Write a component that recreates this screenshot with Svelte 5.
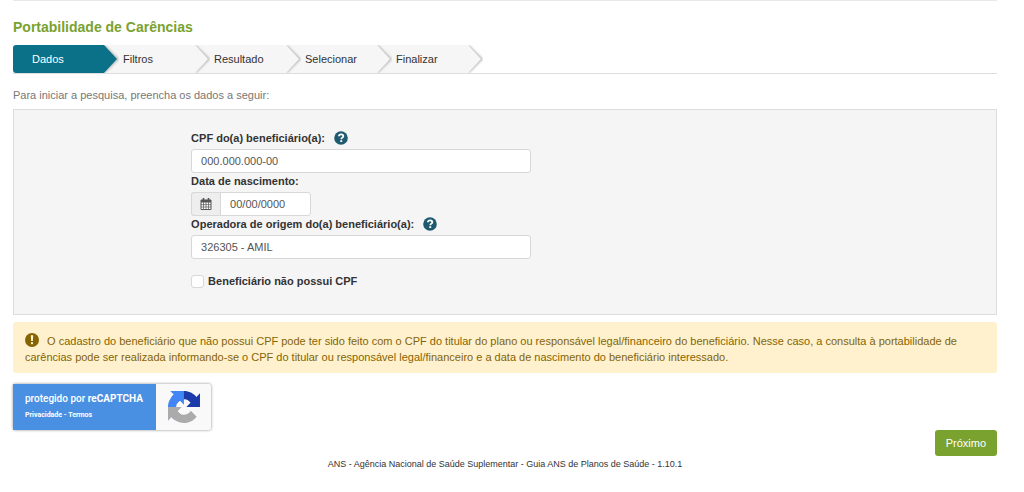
<script lang="ts">
	const steps = ['Dados', 'Filtros', 'Resultado', 'Selecionar', 'Finalizar'];

	let current = $state(0);
	let cpf = $state('000.000.000-00');
	let birthDate = $state('00/00/0000');
	let operator = $state('326305 - AMIL');
	let withoutCpf = $state(false);
</script>

{#snippet helpIcon()}
	<svg class="help" viewBox="0 0 14 14" aria-hidden="true">
		<circle cx="7" cy="7" r="6.8" fill="#1f5a70" />
		<path d="M4.9 5.3C5 3.9 5.9 3.4 7.1 3.4c1.3 0 2.2.7 2.2 1.8 0 1.5-2 1.4-2 3" fill="none" stroke="#fff" stroke-width="1.8" />
		<rect x="6.3" y="9.2" width="1.9" height="1.8" fill="#fff" />
	</svg>
{/snippet}

<main>
	<h1>Portabilidade de Carências</h1>

	<ol class="steps">
		{#each steps as step, i}
			<li class:active={i === current}>
				<span>{step}</span>
				<svg class="arrow" viewBox="0 0 16 28" aria-hidden="true">
					<path class="line" d="M1 1L14 14L1 27" />
					<path class="fill" d="M0 0H1L14 14L1 28H0Z" />
				</svg>
			</li>
		{/each}
	</ol>

	<p class="intro">Para iniciar a pesquisa, preencha os dados a seguir:</p>

	<form id="search" class="panel">
		<div class="fields">
			<div class="label-row">
				<label for="cpf">CPF do(a) beneficiário(a):</label>
				{@render helpIcon()}
			</div>
			<input id="cpf" type="text" bind:value={cpf} />

			<div class="label-row">
				<label for="birth">Data de nascimento:</label>
			</div>
			<div class="input-group">
				<span class="addon">
					<svg viewBox="0 0 12 12" aria-hidden="true">
						<path d="M1 2H11V11.5H1Z" fill="#fff" stroke="#555" />
						<path d="M1 2H11V4.5H1Z" fill="#555" />
						<path d="M3.5 0V3M8.5 0V3" stroke="#555" stroke-width="1.6" />
						<path d="M3.5 4V11M6 4V11M8.5 4V11M1 6.6H11M1 9H11" stroke="#555" stroke-width="0.7" />
					</svg>
				</span>
				<input id="birth" type="text" bind:value={birthDate} />
			</div>

			<div class="label-row">
				<label for="operator">Operadora de origem do(a) beneficiário(a):</label>
				{@render helpIcon()}
			</div>
			<input id="operator" type="text" bind:value={operator} />

			<div class="check">
				<input id="no-cpf" type="checkbox" bind:checked={withoutCpf} />
				<label for="no-cpf">Beneficiário não possui CPF</label>
			</div>
		</div>
	</form>

	<div class="alert">
		<svg viewBox="0 0 14 14" aria-hidden="true">
			<circle cx="7" cy="7" r="7" fill="#856404" />
			<path d="M5.8 2.2H8.2L7.9 8H6.1Z" fill="#fff3cd" />
			<rect x="6" y="9.2" width="2" height="2" fill="#fff3cd" />
		</svg>
		O cadastro do beneficiário que não possui CPF pode ter sido feito com o CPF do titular do plano ou
		responsável legal/financeiro do beneficiário. Nesse caso, a consulta à portabilidade de carências
		pode ser realizada informando-se o CPF do titular ou responsável legal/financeiro e a data de
		nascimento do beneficiário interessado.
	</div>

	<div class="captcha">
		<div class="captcha-text">
			<div>protegido por <strong>reCAPTCHA</strong></div>
			<div class="captcha-links"><a href="#privacidade">Privacidade</a> - <a href="#termos">Termos</a></div>
		</div>
		<div class="captcha-logo">
			<svg viewBox="0 0 64 64" aria-hidden="true">
				<path
					d="M64 31.955l-.033-1.37V4.687l-7.16 7.16C50.948 4.674 42.033.093 32.05.093c-10.4 0-19.622 4.96-25.458 12.64l11.736 11.86a15.55 15.55 0 0 1 4.754-5.334c2.05-1.6 4.952-2.906 8.968-2.906.485 0 .86.057 1.135.163 4.976.393 9.288 3.14 11.828 7.124l-8.307 8.307L64 31.953"
					fill="#1c3aa9"
				/>
				<path
					d="M31.862.094l-1.37.033H4.594l7.16 7.16C4.58 13.147 0 22.06 0 32.046c0 10.4 4.96 19.622 12.64 25.458L24.5 45.768a15.55 15.55 0 0 1-5.334-4.754c-1.6-2.05-2.906-4.952-2.906-8.968 0-.485.057-.86.163-1.135.393-4.976 3.14-9.288 7.124-11.828l8.307 8.307L31.86.095"
					fill="#4285f4"
				/>
				<path
					d="M.001 32.045l.033 1.37v25.898l7.16-7.16c5.86 7.173 14.774 11.754 24.76 11.754 10.4 0 19.622-4.96 25.458-12.64l-11.736-11.86a15.55 15.55 0 0 1-4.754 5.334c-2.05 1.6-4.952 2.906-8.968 2.906-.485 0-.86-.057-1.135-.163-4.976-.393-9.288-3.14-11.828-7.124l8.307-8.307c-10.522.04-22.4.066-27.295-.005"
					fill="#ababab"
				/>
			</svg>
		</div>
	</div>

	<div class="actions">
		<button type="submit" form="search">Próximo</button>
	</div>

	<footer>ANS - Agência Nacional de Saúde Suplementar - Guia ANS de Planos de Saúde - 1.10.1</footer>
</main>

<style>
	:global(body) {
		background: #fff;
	}
	main {
		margin: 0 27px 0 13px;
		border-top: 1px solid #e8e8e8;
		color: #333;
		font-family: 'Liberation Sans', Arial, sans-serif;
		font-size: 11px;
		line-height: 16px;
	}
	h1 {
		margin: 18px 0 9px;
		color: #7aa22f;
		font-size: 14px;
		line-height: 17px;
	}
	.steps {
		display: flex;
		margin: 0;
		padding: 0;
		list-style: none;
		border-bottom: 1px solid #ddd;
	}
	li {
		position: relative;
		box-sizing: border-box;
		width: 91px;
		padding-left: 19px;
		background: #f6f6f6;
		line-height: 28px;
	}
	li.active {
		border-radius: 3px 0 0 3px;
		background: #0b7189;
		color: #fff;
	}
	.arrow {
		position: absolute;
		top: 0;
		left: 100%;
		z-index: 1;
		width: 16px;
		height: 28px;
		margin-left: -1px;
	}
	.arrow .fill {
		fill: #f6f6f6;
	}
	.arrow .line {
		fill: none;
		stroke: #bbb;
		stroke-width: 3;
		filter: blur(1px);
	}
	.active .arrow .fill {
		fill: #0b7189;
	}
	.intro {
		margin: 13px 0 6px;
		color: #777;
	}
	.panel {
		padding: 20px 18% 25px;
		border: 1px solid #ddd;
		background: #f5f5f5;
	}
	.fields {
		max-width: 340px;
	}
	.label-row {
		display: flex;
		align-items: flex-start;
		gap: 9px;
		height: 19px;
	}
	label {
		font-weight: bold;
	}
	.help {
		width: 14px;
		height: 16px;
	}
	input[type='text'] {
		display: block;
		box-sizing: border-box;
		width: 100%;
		height: 24px;
		padding: 0 9px;
		border: 1px solid #d8d8d8;
		border-radius: 3px;
		background: #fff;
		color: #555;
		font: inherit;
	}
	.input-group {
		display: flex;
		width: 120px;
	}
	.addon {
		display: flex;
		flex: none;
		align-items: center;
		justify-content: center;
		width: 28px;
		border: 1px solid #d8d8d8;
		border-right: 0;
		border-radius: 3px 0 0 3px;
		background: #eee;
	}
	.addon svg {
		width: 12px;
		height: 12px;
	}
	.input-group input[type='text'] {
		flex: 1;
		min-width: 0;
		border-radius: 0 3px 3px 0;
	}
	.check {
		display: flex;
		align-items: center;
		gap: 4px;
		margin-top: 14px;
	}
	.check input {
		appearance: none;
		box-sizing: border-box;
		width: 13px;
		height: 13px;
		margin: 0;
		border: 1px solid #d8d8d8;
		border-radius: 3px;
		background: #fff;
	}
	.check input:checked {
		background: #0b7189;
	}
	.alert {
		margin-top: 7px;
		padding: 11px 12px 8px;
		border-radius: 3px;
		background: #fff1cd;
		color: #856404;
	}
	.alert svg {
		width: 14px;
		height: 14px;
		margin-right: 5px;
		vertical-align: -2px;
	}
	.captcha {
		display: flex;
		width: 198px;
		height: 46px;
		margin-top: 11px;
		border-radius: 2px;
		background: #f9f9f9;
		box-shadow: 0 0 3px #888;
	}
	.captcha-text {
		box-sizing: border-box;
		width: 143px;
		padding: 7px 0 0 12px;
		background: #4a90e2;
		color: #fff;
		font-family: Roboto, sans-serif;
		font-size: 10px;
		font-weight: 500;
		white-space: nowrap;
	}
	.captcha-links {
		font-size: 7px;
		font-weight: bold;
	}
	.captcha-links a {
		color: inherit;
		text-decoration: none;
	}
	.captcha-logo {
		display: flex;
		flex: 1;
		align-items: center;
		justify-content: center;
	}
	.captcha-logo svg {
		width: 32px;
		height: 32px;
	}
	.actions {
		display: flex;
		justify-content: flex-end;
	}
	button {
		padding: 5px 11px;
		border: 0;
		border-radius: 3px;
		background: #7aa22f;
		color: #fff;
		font: inherit;
	}
	footer {
		color: #333;
		font-size: 9px;
		text-align: center;
	}
</style>
